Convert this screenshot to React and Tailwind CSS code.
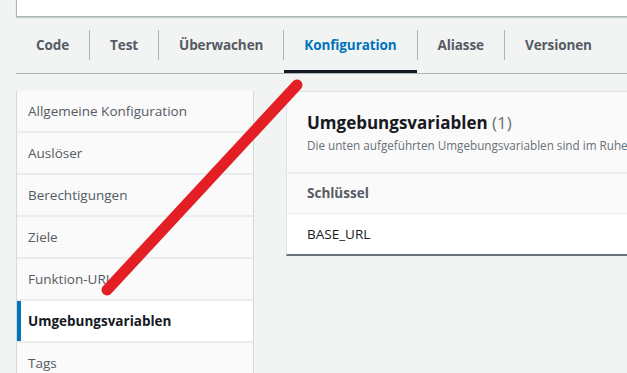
const tabs = ['Code', 'Test', 'Überwachen', 'Konfiguration', 'Aliasse', 'Versionen'];

const navItems = [
  'Allgemeine Konfiguration',
  'Auslöser',
  'Berechtigungen',
  'Ziele',
  'Funktion-URL',
  'Umgebungsvariablen',
  'Tags',
];

export default function App() {
  return (
    <div
      className="relative w-[627px] h-[373px] overflow-hidden bg-[#f2f3f3] text-[#16191f]"
      style={{ fontFamily: '"Open Sans", "Noto Sans", Arial, sans-serif' }}
    >
      {/* Top card */}
      <div className="ml-4 h-[17px] bg-white border-l border-b border-[#aab7b8] shadow-[0_1px_1px_rgba(0,28,36,0.2)]" />

      {/* Tabs */}
      <div className="ml-4 mt-[11px] flex items-stretch border-b border-[#aab7b8] h-[46px]">
        {tabs.map((tab, i) => {
          const active = tab === 'Konfiguration';
          return (
            <div key={tab} className="flex items-stretch">
              {i > 0 && <div className="w-px bg-[#aab7b8] mt-[2px] h-[30px]" />}
              <div
                className={`flex items-start pt-[7px] px-[20px] text-[13.5px] font-bold tracking-[-0.1px] ${
                  active ? 'text-[#0073bb] border-b-[3px] border-[#16191f]' : 'text-[#545b64]'
                }`}
              >
                {tab}
              </div>
            </div>
          );
        })}
      </div>

      <div className="flex mt-[17px] pl-4 gap-[32px]">
        {/* Side navigation */}
        <div className="w-[238px] shrink-0 border-x border-[#d5dbdb] bg-[#eaeded] flex flex-col gap-[2px]">
          {navItems.map((item) => {
            const active = item === 'Umgebungsvariablen';
            return (
              <div
                key={item}
                className={`h-[40px] flex items-center text-[13.5px] ${
                  active
                    ? 'bg-white font-bold text-[#16191f] border-l-4 border-[#0073bb] pl-[7px]'
                    : 'bg-[#fafafa] text-[#545b64] pl-[11px]'
                }`}
              >
                {item}
              </div>
            );
          })}
        </div>

        {/* Environment variables card */}
        <div className="flex-1 self-start min-w-[400px] bg-white border-l border-t border-[#e1e4e4] border-b-2 border-b-[#687078]">
          <div className="h-[82px] bg-[#fafafa] border-b-2 border-[#eaeded] pl-[20px] pt-[18px]">
            <div className="text-[17px] font-bold leading-[26px] whitespace-nowrap">
              Umgebungsvariablen <span className="font-normal text-[#687078]">(1)</span>
            </div>
            <div className="text-[11.7px] text-[#687078] leading-[18px] whitespace-nowrap">
              Die unten aufgeführten Umgebungsvariablen sind im Ruhe
            </div>
          </div>
          <div className="h-[40px] bg-[#fafafa] border-b border-[#eaeded] flex items-center pl-[20px] text-[13.5px] font-bold text-[#545b64]">
            Schlüssel
          </div>
          <div className="h-[40px] flex items-center pl-[20px] text-[13.5px] text-[#16191f]">
            BASE_URL
          </div>
        </div>
      </div>

      {/* Red annotation stroke */}
      <svg className="absolute left-0 top-0 pointer-events-none" width="627" height="373">
        <line x1="297" y1="85" x2="107" y2="290" stroke="#e31e24" strokeWidth="11" strokeLinecap="round" />
      </svg>
    </div>
  );
}
